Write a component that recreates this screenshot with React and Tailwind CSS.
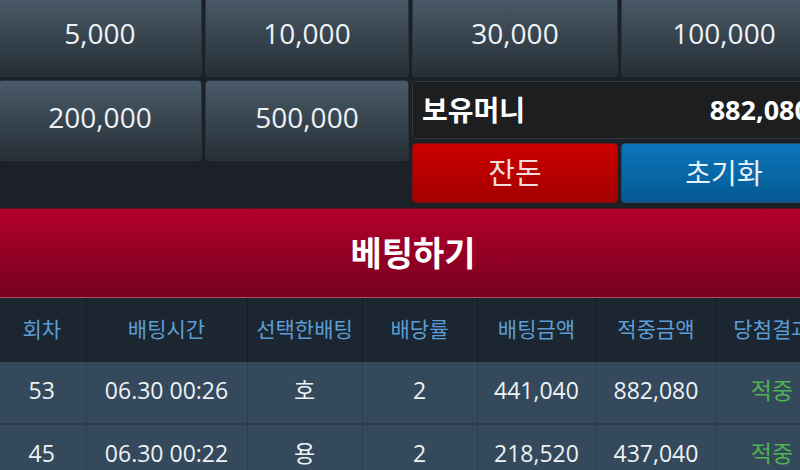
import React from "react";

const font = "font-['Open_Sans','Noto_Sans_CJK_KR',sans-serif]";

function ChipBtn({ label }) {
  return (
    <div className="flex h-[81px] items-center justify-center rounded-[4px] border border-[#2c353d] bg-gradient-to-b from-[#4b5b69] to-[#252f37] pb-[7px] text-[28px] text-[#eef2f5]">
      {label}
    </div>
  );
}

const cols = [88, 161, 115, 115, 119, 120, 112];
const headers = ["회차", "배팅시간", "선택한배팅", "배당률", "배팅금액", "적중금액", "당첨결과"];
const rows = [
  ["53", "06.30 00:26", "호", "2", "441,040", "882,080", "적중"],
  ["45", "06.30 00:22", "용", "2", "218,520", "437,040", "적중"],
];

export default function App() {
  return (
    <div className={`w-[800px] h-[470px] overflow-hidden bg-[#1b2126] ${font}`}>
      <div className="ml-[-2px] mt-[-4px] w-[830px]">
        <div className="flex items-start gap-x-[3px]">
          <div className="grid w-[411px] grid-cols-2 gap-[3px]">
            <ChipBtn label="5,000" />
            <ChipBtn label="10,000" />
            <ChipBtn label="200,000" />
            <ChipBtn label="500,000" />
          </div>
          <div className="flex w-[415px] flex-col">
            <div className="grid grid-cols-2 gap-x-[3px]">
              <ChipBtn label="30,000" />
              <ChipBtn label="100,000" />
            </div>
            <div className="mt-[4px] flex h-[58px] items-center justify-between rounded-[4px] border border-[#34383c] bg-[#1d1e20] pl-[9px] pr-[16px] text-[28px] font-bold text-white">
              <span>보유머니</span>
              <span className="text-[27px]">882,080</span>
            </div>
            <div className="mt-[4px] grid grid-cols-2 gap-x-[3px]">
              <div className="flex h-[60px] items-center justify-center rounded-[4px] border border-[#7d1010] bg-gradient-to-b from-[#cc0000] to-[#a30000] text-[29px] text-[#f6dcdc]">
                잔돈
              </div>
              <div className="flex h-[60px] items-center justify-center rounded-[4px] border border-[#2a4a66] bg-gradient-to-b from-[#0c76bb] to-[#055a92] text-[28px] text-[#e8f1f8]">
                초기화
              </div>
            </div>
          </div>
        </div>

        <div className="mt-[5px] flex h-[90px] items-center justify-center border-t border-[#5a1020] border-b border-b-[#b04a60] bg-gradient-to-b from-[#b4002b] to-[#78001f] text-[34px] font-bold text-white">
          베팅하기
        </div>

        <table className="table-fixed border-collapse" style={{ width: 830 }}>
          <colgroup>
            {cols.map((w, i) => (
              <col key={i} style={{ width: w }} />
            ))}
          </colgroup>
          <thead>
            <tr className="h-[64px] bg-[#1b2630]">
              {headers.map((h, i) => (
                <th
                  key={i}
                  className="border-r border-[#141c23] p-0 text-center text-[21px] font-normal text-[#5b9ed6] whitespace-nowrap"
                >
                  {h}
                </th>
              ))}
            </tr>
          </thead>
          <tbody>
            {rows.map((r, ri) => (
              <tr key={ri} className="h-[62px] border-b-2 border-[#2b3d4d] bg-[#34495c]">
                {r.map((c, ci) => (
                  <td
                    key={ci}
                    className={`border-r border-[#2c3f50] p-0 pb-[4px] text-center text-[23px] whitespace-nowrap ${
                      ci === 6 ? "text-[21px] text-[#4fb34f]" : ci === 2 ? "text-[21px] text-[#eef2f4]" : "text-[#eef2f4]"
                    }`}
                  >
                    {c}
                  </td>
                ))}
              </tr>
            ))}
          </tbody>
        </table>
      </div>
    </div>
  );
}
